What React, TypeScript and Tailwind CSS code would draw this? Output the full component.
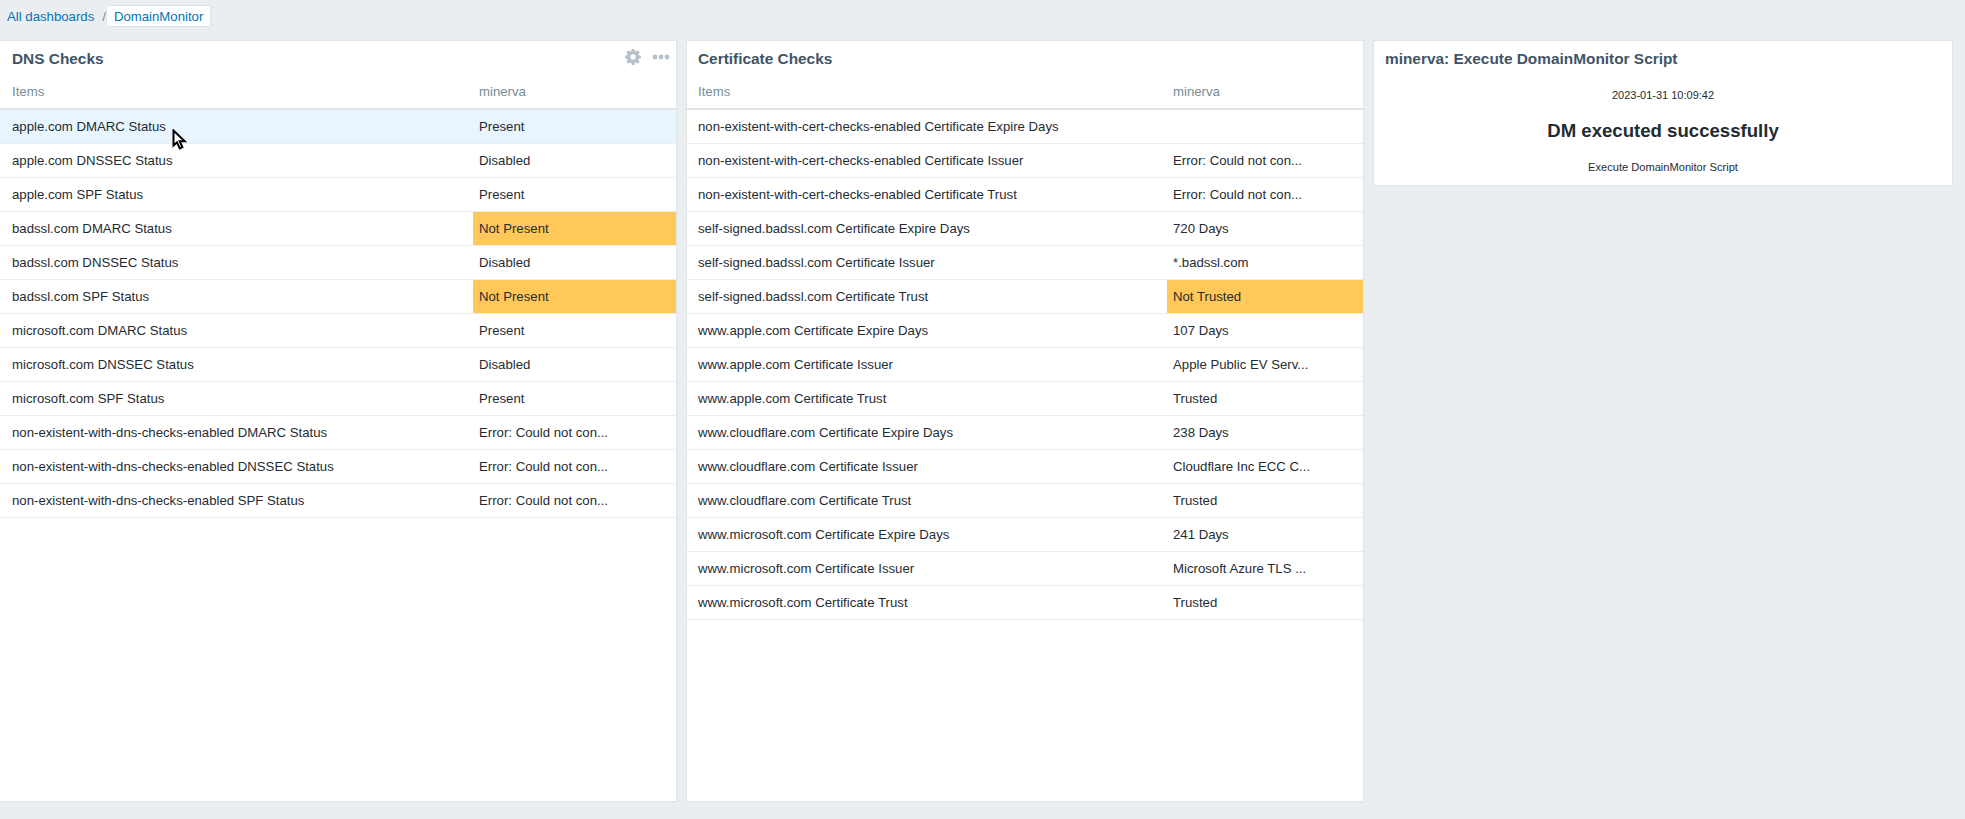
const dnsRows = [
  { name: 'apple.com DMARC Status', value: 'Present', hovered: true },
  { name: 'apple.com DNSSEC Status', value: 'Disabled' },
  { name: 'apple.com SPF Status', value: 'Present' },
  { name: 'badssl.com DMARC Status', value: 'Not Present', warn: true },
  { name: 'badssl.com DNSSEC Status', value: 'Disabled' },
  { name: 'badssl.com SPF Status', value: 'Not Present', warn: true },
  { name: 'microsoft.com DMARC Status', value: 'Present' },
  { name: 'microsoft.com DNSSEC Status', value: 'Disabled' },
  { name: 'microsoft.com SPF Status', value: 'Present' },
  { name: 'non-existent-with-dns-checks-enabled DMARC Status', value: 'Error: Could not con...' },
  { name: 'non-existent-with-dns-checks-enabled DNSSEC Status', value: 'Error: Could not con...' },
  { name: 'non-existent-with-dns-checks-enabled SPF Status', value: 'Error: Could not con...' },
];

const certRows = [
  { name: 'non-existent-with-cert-checks-enabled Certificate Expire Days', value: '' },
  { name: 'non-existent-with-cert-checks-enabled Certificate Issuer', value: 'Error: Could not con...' },
  { name: 'non-existent-with-cert-checks-enabled Certificate Trust', value: 'Error: Could not con...' },
  { name: 'self-signed.badssl.com Certificate Expire Days', value: '720 Days' },
  { name: 'self-signed.badssl.com Certificate Issuer', value: '*.badssl.com' },
  { name: 'self-signed.badssl.com Certificate Trust', value: 'Not Trusted', warn: true },
  { name: 'www.apple.com Certificate Expire Days', value: '107 Days' },
  { name: 'www.apple.com Certificate Issuer', value: 'Apple Public EV Serv...' },
  { name: 'www.apple.com Certificate Trust', value: 'Trusted' },
  { name: 'www.cloudflare.com Certificate Expire Days', value: '238 Days' },
  { name: 'www.cloudflare.com Certificate Issuer', value: 'Cloudflare Inc ECC C...' },
  { name: 'www.cloudflare.com Certificate Trust', value: 'Trusted' },
  { name: 'www.microsoft.com Certificate Expire Days', value: '241 Days' },
  { name: 'www.microsoft.com Certificate Issuer', value: 'Microsoft Azure TLS ...' },
  { name: 'www.microsoft.com Certificate Trust', value: 'Trusted' },
];

type Row = { name: string; value: string; warn?: boolean; hovered?: boolean };

const GearIcon = () => (
  <svg width="16" height="16" viewBox="0 0 24 24" fill="#b5c1c8">
    <path
      fillRule="evenodd"
      d="M10 0h4l.6 3.100 1.900.8L19.100 2 22 4.900l-1.900 2.600.8 1.900L24 10v4l-3.100.6-.8 1.900L22 19.100 19.100 22l-2.600-1.900-1.900.8L14 24h-4l-.6-3.100-1.900-.8L4.900 22 2 19.100l1.900-2.600-.8-1.900L0 14v-4l3.100-.6.800-1.900L2 4.900 4.900 2l2.600 1.900 1.900-.8L10 0zm2 8a4 4 0 1 0 0 8 4 4 0 0 0 0-8z"
    />
  </svg>
);

const DotsIcon = () => (
  <svg width="18" height="6" viewBox="0 0 18 6" fill="#b5c1c8">
    <circle cx="3" cy="3" r="2.400" />
    <circle cx="9" cy="3" r="2.400" />
    <circle cx="15" cy="3" r="2.400" />
  </svg>
);

const Cursor = () => (
  <svg className="absolute left-[172px] top-[129px]" width="16" height="21" viewBox="0 0 16 21">
    <path
      d="M1.500 1.500v15l3.500-3.200 2.800 6 2.600-1.200-2.700-5.800h5z"
      fill="#fff"
      stroke="#000"
      strokeWidth="2"
      strokeLinejoin="miter"
    />
  </svg>
);

const ChecksTable = ({ rows, firstWidth, padLeft }: { rows: Row[]; firstWidth: string; padLeft: string }) => (
  <table className="w-full table-fixed border-collapse text-[13.2px]">
    <thead>
      <tr className="h-[35px] border-b-2 border-[#dfe4e7]">
        <th className={`${firstWidth} ${padLeft} pt-px text-left font-normal text-[#768d99]`}>Items</th>
        <th className="pl-[6px] pt-px text-left font-normal text-[#768d99]">minerva</th>
      </tr>
    </thead>
    <tbody>
      {rows.map((row) => (
        <tr
          key={row.name}
          className={`h-[34px] border-b border-[#ebeef0] ${row.hovered ? 'bg-[#e8f5ff]' : ''}`}
        >
          <td className={`${padLeft} pt-px text-[#1f2c33]`}>{row.name}</td>
          <td className={`pl-[6px] pt-px text-[#1f2c33] ${row.warn ? 'bg-[#ffc859]' : ''}`}>{row.value}</td>
        </tr>
      ))}
    </tbody>
  </table>
);

const PanelTitle = ({ title, padLeft }: { title: string; padLeft: string }) => (
  <h4 className={`flex h-[33px] items-center ${padLeft} pt-[3px] text-[15.4px] font-bold text-[#3f5566]`}>
    {title}
  </h4>
);

export default function App() {
  return (
    <div className="relative h-[819px] overflow-hidden bg-[#ebeef0] font-['Liberation_Sans',Arial,sans-serif]">
      <nav className="flex h-[40px] items-start pt-[5px] text-[13.2px]">
        <a className="ml-[7px] flex h-[22px] items-center pt-px text-[#0275b8]">All dashboards</a>
        <span className="ml-[8px] flex h-[22px] items-center pt-px text-[#768d99]">/</span>
        <a className="flex h-[22px] items-center rounded-[2px] border border-[#dfe4e7] bg-white px-[7px] pt-px text-[#0275b8]">
          DomainMonitor
        </a>
      </nav>

      <div className="flex items-start">
        <section className="h-[762px] w-[677px] border border-l-0 border-[#dfe4e7] bg-white">
          <div className="relative">
            <PanelTitle title="DNS Checks" padLeft="pl-[12px]" />
            <div className="absolute right-[6px] top-[8px] flex items-center gap-[11px]">
              <GearIcon />
              <DotsIcon />
            </div>
          </div>
          <ChecksTable rows={dnsRows} firstWidth="w-[473px]" padLeft="pl-[12px]" />
        </section>

        <section className="ml-[9px] h-[762px] w-[678px] border border-[#dfe4e7] bg-white">
          <PanelTitle title="Certificate Checks" padLeft="pl-[11px]" />
          <ChecksTable rows={certRows} firstWidth="w-[480px]" padLeft="pl-[11px]" />
        </section>

        <section className="ml-[9px] flex h-[146px] w-[580px] flex-col border border-[#dfe4e7] bg-white">
          <PanelTitle title="minerva: Execute DomainMonitor Script" padLeft="pl-[11px]" />
          <div className="flex flex-col items-center text-[#1f2c33]">
            <p className="mt-[14px] text-[11px] leading-[14px]">2023-01-31 10:09:42</p>
            <p className="mt-[17px] text-[18.6px] font-bold leading-[24px]">DM executed successfully</p>
            <p className="mt-[17px] text-[11.1px] leading-[14px]">Execute DomainMonitor Script</p>
          </div>
        </section>
      </div>

      <Cursor />
    </div>
  );
}
